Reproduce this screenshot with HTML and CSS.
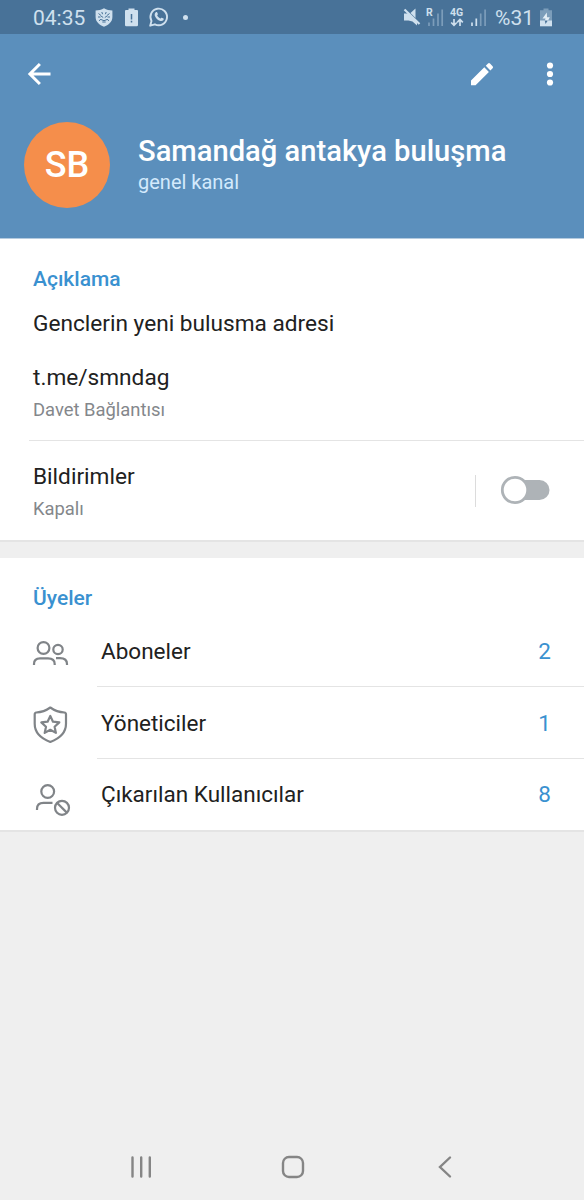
FILE: index.html
```html
<!DOCTYPE html>
<html lang="tr">
<head>
  <meta charset="UTF-8" />
  <meta name="viewport" content="width=device-width, initial-scale=1.0" />
  <title>Samandağ antakya buluşma</title>
  <link rel="stylesheet" href="styles.css">
</head>
<body>
  <div class="status-bar">
    <span class="clock">04:35</span>
    <svg class="shield" width="18" height="19" viewBox="0 0 18 19">
      <path d="M9 .3C6.500 1.900 3.500 2.300.6 2.500V9C.6 14 4.500 17 9 18.700C13.500 17 17.400 14 17.400 9V2.500C14.500 2.300 11.500 1.900 9 .3z" fill="#cfe0ee"/>
      <g fill="none" stroke="#487298" stroke-width="1">
        <path d="M3.500 5.500l2.500 2M14.500 5.500l-2.500 2M3 9h2.500M15 9h-2.500M4 12.800l2-1.600M14 12.800l-2-1.600M6.800 4l.8 2.200M11.200 4l-.8 2.200"/>
        <path d="M6 8l2.200 1.500M12 8L9.800 9.500M6 11.500q3 2.500 6 0M7.300 14h3.400"/>
      </g>
    </svg>
    <svg class="batt-alert" width="13" height="19" viewBox="0 0 13 19">
      <path d="M3.500 2V.5h6V2h2.500q1 0 1 1v14q0 1.300-1.300 1.300H1.300Q0 18.300 0 17V3q0-1 1-1z" fill="#cfe0ee"/>
      <path d="M6.500 6v5.500M6.500 12.800v1.700" stroke="#487298" stroke-width="1.500"/>
    </svg>
    <svg class="whatsapp" width="20" height="20" viewBox="0 0 20 20">
      <path d="M1.200 18.700l1.300-4.700A8.300 8.300 0 1 1 5.900 17.300z" fill="none" stroke="#cfe0ee" stroke-width="1.900" stroke-linejoin="round"/>
      <path d="M6.800 5.300c.5-.4 1.200-.3 1.400.2l.7 1.600c.1.500-.5 1-.7 1.400.7 1.400 1.900 2.500 3.300 3.100.4-.3.800-1.100 1.300-.9l1.700.9c.5.300.2 1.300-.2 1.700-1 1-2.400.9-3.600.4-2.300-.9-4.100-2.800-4.900-5-.3-1.300 0-2.600 1-3.400z" fill="#cfe0ee"/>
    </svg>
    <span class="dot"></span>

    <svg class="mute" width="18" height="18" viewBox="0 0 18 18">
      <path d="M1 5.500h4.500L14 14v3.500L9.500 13.500 5.500 12.500H1zM7.500 5L12.500.5v9.500z" fill="#cfe0ee"/>
      <path d="M1.500 1.500L16.500 16" stroke="#cfe0ee" stroke-width="2.200"/>
    </svg>
    <svg class="signal-r" width="18" height="25" viewBox="0 -3 18 25">
      <text x="0" y="8" class="tiny">R</text>
      <path d="M3 14.500V18M7.500 10.500V18M12 5.500V18M16.200 1.500V18" stroke="#7c9dba" stroke-width="1.700"/>
    </svg>
    <svg class="net" width="14" height="25" viewBox="0 -3 14 25">
      <text x="0" y="8.300" class="tiny">4G</text>
      <path d="M4 11v6M1.200 14.500L4 17.400l2.800-2.900M10 18v-6M7.200 14.300L10 11.500l2.800 2.800" fill="none" stroke="#cfe0ee" stroke-width="1.700"/>
    </svg>
    <svg class="signal" width="17" height="19" viewBox="0 0 17 19">
      <path d="M2 14.500V18M6.300 10.500V18" stroke="#cfe0ee" stroke-width="1.700"/>
      <path d="M10.700 5.500V18M15.100 1.500V18" stroke="#7c9dba" stroke-width="1.700"/>
    </svg>
    <span class="percent">%31</span>
    <svg class="batt" width="12" height="19" viewBox="0 0 12 19">
      <path d="M3.500 2.200V.5h5v1.700H12V13H0V2.200z" fill="#7c9dba"/>
      <path d="M0 12.500h12v5.800H0z" fill="#cfe0ee"/>
      <path d="M6.800 4.500L2.500 10.500h3L4.800 13h3l2-3.800H7z" fill="#e4eef6"/>
      <path d="M4.800 12.500h3L5.500 16z" fill="#487298"/>
    </svg>
  </div>

  <header>
    <div class="toolbar">
      <svg class="back" width="24" height="24" viewBox="0 0 24 24">
        <path d="M23.500 12H3M12.900 2L2.900 12l10 10" fill="none" stroke="#fff" stroke-width="3"/>
      </svg>
      <svg class="edit" width="24" height="24" viewBox="0 0 24 24">
        <path d="M1 23.200v-4.600L14.300 5.300l4.600 4.600L5.600 23.200zM15.800 3.800L18 1.600q1-1 2 0l2.600 2.600q1 1 0 2l-2.200 2.200z" fill="#fff"/>
      </svg>
      <svg class="more" width="8" height="24" viewBox="0 0 8 24">
        <circle cx="4" cy="3.500" r="3.100" fill="#fff"/>
        <circle cx="4" cy="12" r="3.100" fill="#fff"/>
        <circle cx="4" cy="20.500" r="3.100" fill="#fff"/>
      </svg>
    </div>
    <div class="profile">
      <div class="avatar">SB</div>
      <div class="names">
        <h1>Samandağ antakya buluşma</h1>
        <p>genel kanal</p>
      </div>
    </div>
  </header>

  <section class="info">
    <h2>Açıklama</h2>
    <p class="about">Genclerin yeni bulusma adresi</p>
    <p class="link">t.me/smndag</p>
    <p class="sub">Davet Bağlantısı</p>
    <div class="notifications">
      <div class="label">
        <p class="link">Bildirimler</p>
        <p class="sub">Kapalı</p>
      </div>
      <div class="separator"></div>
      <svg class="toggle" width="50" height="30" viewBox="0 0 50 30">
        <rect x="8" y="5" width="41.500" height="20" rx="10" fill="#aeb3b7"/>
        <circle cx="15" cy="15" r="12.700" fill="#fff" stroke="#aeb3b7" stroke-width="2.800"/>
      </svg>
    </div>
  </section>

  <section class="members">
    <h2>Üyeler</h2>
    <div class="row">
      <svg width="40" height="40" viewBox="0 0 40 40">
        <circle cx="13.500" cy="14" r="5.900"/>
        <circle cx="28" cy="15.500" r="4.700"/>
        <path d="M4 31v-1q0-5.600 6-5.600h8q6.700 0 6.700 5.600v1M26 24.200h4q7 0 7 5.800v1"/>
      </svg>
      <div class="cell"><span>Aboneler</span><b>2</b></div>
    </div>
    <div class="row">
      <svg width="40" height="40" viewBox="0 0 40 40">
        <path d="M20.300 1.500C16 4.600 10.500 6.300 6.300 6.500q-1.600.2-1.600 2v9.300c0 9 6.800 14.900 15.600 18.200 8.800-3.300 15.700-9.200 15.700-18.200v-9.300q0-1.800-1.600-2C30 6.300 24.600 4.600 20.300 1.500z"/>
        <path d="M20.300 9.900l2.700 5.800 6.300.7-4.700 4.300 1.300 6.200-5.600-3.100-5.600 3.100 1.300-6.200-4.700-4.300 6.300-.7z"/>
      </svg>
      <div class="cell"><span>Yöneticiler</span><b>1</b></div>
    </div>
    <div class="row">
      <svg width="40" height="40" viewBox="0 0 40 40">
        <circle cx="17.700" cy="13.500" r="6.400"/>
        <path d="M7 32v-1q0-6.200 6.500-6.200h9"/>
        <circle cx="32" cy="29.800" r="7"/>
        <path d="M27.200 25l9.600 9.600"/>
      </svg>
      <div class="cell"><span>Çıkarılan Kullanıcılar</span><b>8</b></div>
    </div>
  </section>

  <nav>
    <svg width="22" height="24" viewBox="0 0 22 24">
      <path d="M2.500 2.500v19M11.200 2.500v19M19.800 2.500v19"/>
    </svg>
    <svg width="24" height="24" viewBox="0 0 24 24">
      <rect x="2" y="2" width="20" height="20" rx="6"/>
    </svg>
    <svg width="14" height="24" viewBox="0 0 14 24">
      <path d="M12 2.500L2 12l10 9.500"/>
    </svg>
  </nav>
</body>
</html>
```
FILE: styles.css
```css
:root {
  --header: #5b8fbc;
  --status: #487298;
  --status-fg: #cfe0ee;
  --blue: #3a91d0;
  --text: #212121;
  --muted: #84878b;
  --line: #e4e4e4;
  --bg: #efefef;
}

* {
  box-sizing: border-box;
  margin: 0;
}

body {
  display: flex;
  flex-direction: column;
  min-height: 1200px;
  background: var(--bg);
  color: var(--text);
  font-family: Roboto, sans-serif;
}

svg {
  display: block;
  flex: none;
  overflow: visible;
}

.status-bar {
  display: flex;
  align-items: center;
  height: 34px;
  padding-left: 33px;
  background: var(--status);
  color: var(--status-fg);
}

.clock {
  width: 62px;
  padding-top: 1px;
  font-size: 21px;
}

.batt-alert {
  margin-left: 12px;
}

.whatsapp {
  margin-left: 11px;
}

.dot {
  width: 5px;
  height: 5px;
  margin-left: 14px;
  border-radius: 50%;
  background: var(--status-fg);
}

.mute {
  margin-left: 215px;
}

.signal-r {
  margin-left: 5px;
}

.net {
  margin-left: 6px;
}

.signal {
  margin-left: 6px;
}

.tiny {
  fill: var(--status-fg);
  font-size: 10.5px;
  font-weight: 700;
}

.percent {
  width: 45px;
  margin-left: 8px;
  padding-top: 1px;
  font-size: 21px;
}

header {
  height: 205px;
  background: var(--header);
  border-bottom: 1px solid #b5cbdf;
  color: #fff;
}

.toolbar {
  display: flex;
  align-items: center;
  height: 80px;
  padding: 0 30px 0 27px;
}

.edit {
  margin-left: auto;
  margin-right: 52px;
}

.profile {
  display: flex;
  align-items: center;
  height: 102px;
  padding-left: 24px;
}

.avatar {
  width: 86px;
  height: 86px;
  border-radius: 50%;
  background: #f58e4b;
  font-size: 36px;
  font-weight: 500;
  line-height: 86px;
  text-align: center;
}

.names {
  margin-left: 28px;
}

h1 {
  font-size: 29.15px;
  font-weight: 500;
  line-height: 34px;
  white-space: nowrap;
}

.names p {
  color: #d3eafc;
  font-size: 20px;
  line-height: 28px;
}

section {
  background: #fff;
}

h2 {
  color: var(--blue);
  font-size: 21px;
  font-weight: 500;
  line-height: 26px;
}

.info {
  height: 303px;
  padding: 27px 0 0 33px;
  border-bottom: 2px solid var(--line);
}

.about,
.link {
  font-size: 22.65px;
  line-height: 30px;
}

.about {
  margin-top: 17px;
}

.about + .link {
  margin-top: 24px;
}

.sub {
  margin-top: 4px;
  color: var(--muted);
  font-size: 18.4px;
  line-height: 26px;
}

.notifications {
  display: flex;
  align-items: center;
  height: 100px;
  margin: 17px 0 0 -4px;
  padding: 0 34px 0 4px;
  border-top: 1px solid var(--line);
}

.label {
  flex: 1;
  padding-top: 2px;
}

.label .sub {
  margin-top: 4px;
}

.separator {
  width: 1px;
  height: 32px;
  margin-right: 24px;
  background: #dcdcdc;
}

.toggle {
  margin-bottom: 1px;
}

.members {
  height: 274px;
  margin-top: 16px;
  padding-top: 27px;
  border-bottom: 2px solid var(--line);
}

.members h2 {
  margin-bottom: 4px;
  padding-left: 33px;
}

.row {
  display: flex;
  align-items: center;
  height: 72px;
  padding-left: 30px;
}

.row svg {
  margin-top: 5px;
  fill: none;
  stroke: #808488;
  stroke-width: 2.2;
  stroke-linejoin: round;
}

.cell {
  display: flex;
  flex: 1;
  justify-content: space-between;
  height: 72px;
  margin-left: 27px;
  padding: 0 33px 0 4px;
  border-bottom: 1px solid var(--line);
  font-size: 22.5px;
  line-height: 73px;
}

.row:last-child .cell {
  border-bottom: none;
  line-height: 71px;
}

.cell b {
  color: var(--blue);
  font-weight: 400;
}

nav {
  display: flex;
  align-items: center;
  justify-content: space-between;
  height: 66px;
  margin-top: auto;
  padding: 0 132px 0 130px;
}

nav svg {
  fill: none;
  stroke: #858585;
  stroke-width: 2.4;
  stroke-linecap: round;
}

nav svg:nth-child(2) {
  margin-right: 4px;
}
```
